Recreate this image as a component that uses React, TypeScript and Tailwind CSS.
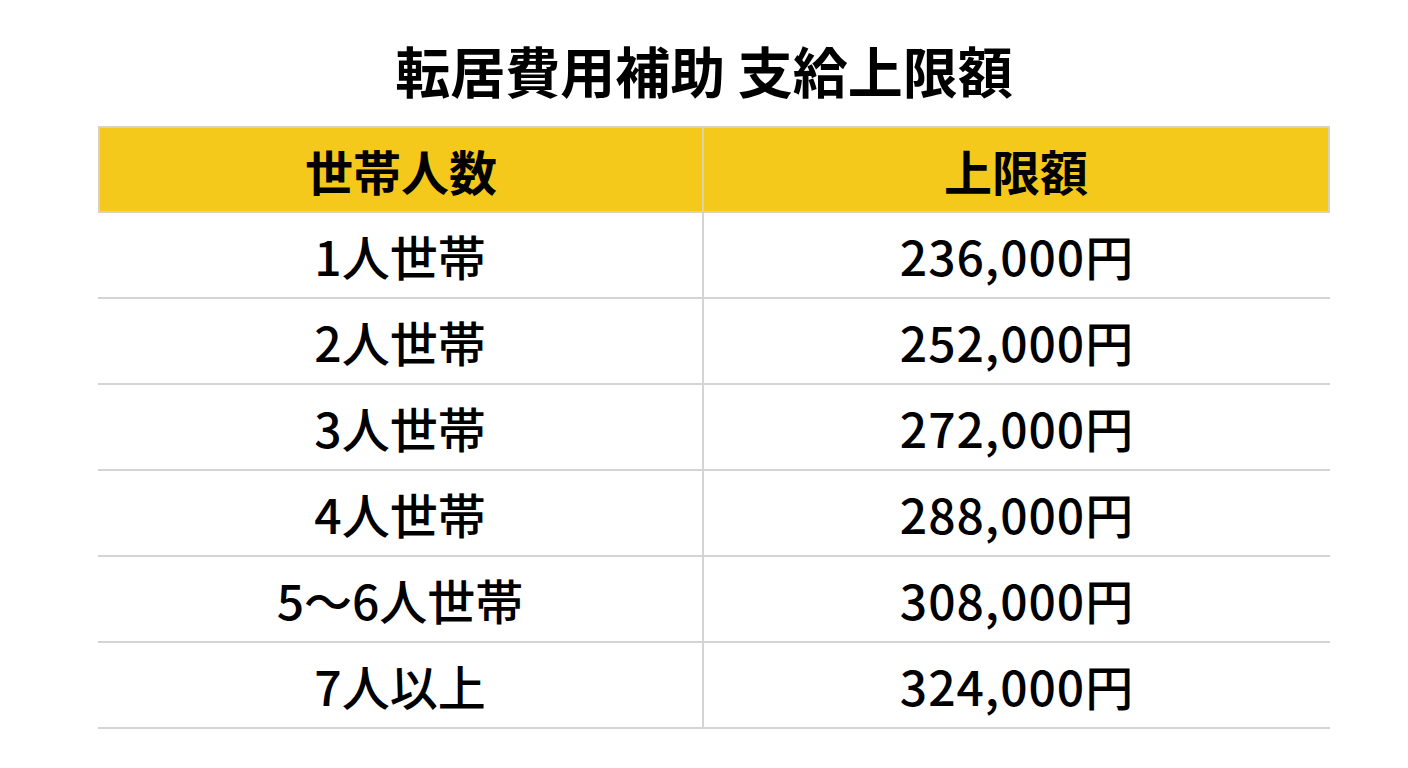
import React from "react";

const rows: [string, string][] = [
  ["1人世帯", "236,000円"],
  ["2人世帯", "252,000円"],
  ["3人世帯", "272,000円"],
  ["4人世帯", "288,000円"],
  ["5～6人世帯", "308,000円"],
  ["7人以上", "324,000円"],
];

export default function App() {
  return (
    <div
      className="w-[1408px] h-[768px] bg-white text-black"
      style={{ fontFamily: '"Noto Sans CJK JP", "Noto Sans", sans-serif' }}
    >
      <div className="h-[126px] flex items-center justify-center pt-[12px]">
        <h1 className="text-[55px] font-bold leading-none">
          転居費用補助 支給上限額
        </h1>
      </div>
      <div className="ml-[98px] w-[1232px]">
        <div className="flex h-[87px] bg-[#f5c91c] border-2 border-[#d8d2b8]">
          <div className="w-[604px] flex items-center justify-center text-[48px] font-bold border-r-2 border-[#dcd4b0]">
            世帯人数
          </div>
          <div className="flex-1 flex items-center justify-center text-[48px] font-bold">
            上限額
          </div>
        </div>
        {rows.map(([a, b]) => (
          <div key={a} className="flex h-[86px] border-b-2 border-[#d4d4d4]">
            <div className="w-[606px] flex items-center justify-center text-[48px] font-medium border-r-2 border-[#d4d4d4]">
              {a}
            </div>
            <div className="flex-1 flex items-center justify-center text-[48px] font-medium tracking-[1px]">
              {b}
            </div>
          </div>
        ))}
      </div>
    </div>
  );
}
